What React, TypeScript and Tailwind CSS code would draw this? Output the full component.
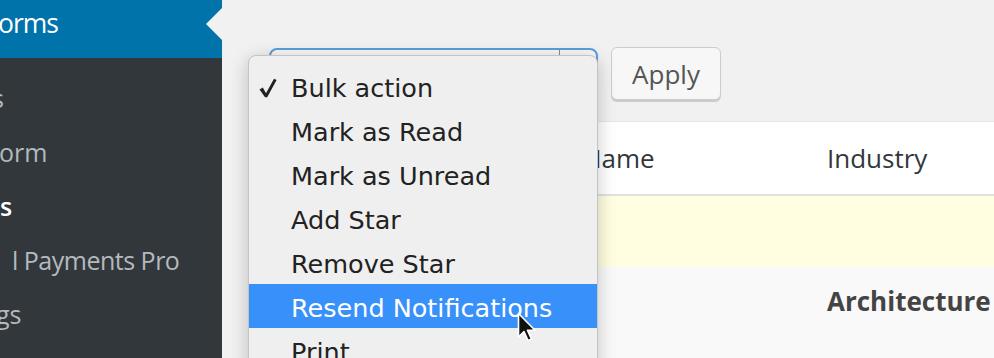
import React from "react";

const items = [
  "Bulk action",
  "Mark as Read",
  "Mark as Unread",
  "Add Star",
  "Remove Star",
  "Resend Notifications",
  "Print",
];

export default function App() {
  return (
    <div className="w-[994px] h-[358px] overflow-hidden flex bg-[#f1f1f1] font-['Open_Sans',sans-serif]">
      {/* Sidebar */}
      <div className="w-[222px] shrink-0 h-full bg-[#32373c] overflow-hidden relative">
        <div className="h-[58px] bg-[#0073aa] text-white text-[26.5px] tracking-[-1px] leading-[46px] overflow-hidden whitespace-nowrap">
          <span className="ml-[-2px] inline-block">orms</span>
        </div>
        <div className="absolute right-0 top-[8px] w-0 h-0 border-y-[16px] border-y-transparent border-r-[16px] border-r-[#f1f1f1]" />
        <div className="pt-[13px] text-[25px] text-[#b4b9be] whitespace-nowrap">
          <div className="h-[54px] leading-[54px]"><span className="ml-[-8px] inline-block">s</span></div>
          <div className="h-[54px] leading-[54px]"><span className="ml-[-1px] inline-block">orm</span></div>
          <div className="h-[54px] leading-[54px] text-white font-semibold"><span className="inline-block">s</span></div>
          <div className="h-[54px] leading-[54px] pl-[12px] tracking-[-0.5px]">l Payments Pro</div>
          <div className="h-[54px] leading-[54px]"><span className="ml-[-4px] inline-block">gs</span></div>
        </div>
      </div>

      {/* Main */}
      <div className="flex-1 relative h-full overflow-hidden">
        <div className="pt-[47px] pl-[46px] flex flex-col">
          <div className="flex items-start gap-[13px]">
            <div className="ml-[1px] mt-[1px] w-[329px] h-[53px] rounded-[8px] border-2 border-[#5b9dd9] bg-[#f7f7f7] relative">
              <div className="absolute right-[36px] top-0 w-px h-[6px] bg-[#8c8c8c]" />
            </div>
            <button className="w-[110px] h-[53px] rounded-[6px] border border-[#cccccc] bg-[#f7f7f7] shadow-[0_2px_0_#cccccc] text-[26px] text-[#555555] leading-none">
              Apply
            </button>
          </div>

          <div className="mt-[20px] border-t border-[#e5e5e5] w-[740px]">
            <div className="grid grid-cols-[314px_245px_1fr] h-[74px] bg-white border-b-2 border-[#e1e1e1] text-[26px] text-[#32373c] leading-[72px] whitespace-nowrap">
              <div />
              <div>Name</div>
              <div>Industry</div>
            </div>
            <div className="h-[71px] bg-[#fffee0]" />
            <div className="grid grid-cols-[314px_245px_1fr] h-[120px] bg-[#f9f9f9] pt-[16px] text-[26px] leading-[36px] text-[#444444] whitespace-nowrap">
              <div />
              <div />
              <div className="font-bold">Architecture</div>
            </div>
          </div>
        </div>

        {/* Dropdown menu overlay */}
        <div className="absolute left-[26px] top-[55px] w-[350px] h-[340px] rounded-[8px] border border-[#c4c4c4] bg-[#efefef] shadow-[0_4px_18px_rgba(0,0,0,0.22)] pt-[8px] font-['DejaVu_Sans',sans-serif] text-[25.5px] text-[#222222] whitespace-nowrap overflow-hidden">
          {items.map((t, i) => (
            <div
              key={t}
              className={
                "relative h-[44px] pt-[4px] leading-[40px] pl-[42px] " +
                (i === 5 ? "bg-[#3891fa] text-white" : "")
              }
            >
              {i === 0 && (
                <svg
                  className="absolute left-[10px] top-[14px]"
                  width="18"
                  height="20"
                  viewBox="0 0 18 20"
                >
                  <path d="M0.5 11.5 L3.8 9.6 L7 15.2 L15 0.8 L17.6 2 L8.2 19.2 L6 19.2 Z" fill="#222222" />
                </svg>
              )}
              {t}
            </div>
          ))}
        </div>

        {/* Mouse cursor */}
        <svg
          className="absolute left-[295px] top-[312px]"
          width="22"
          height="32"
          viewBox="0 0 22 32"
        >
          <path
            d="M1.5 1.5 L1.5 25 L7 19.5 L11 28.5 L14.5 27 L10.5 18.3 L18 18.3 Z"
            fill="#111111"
            stroke="#ffffff"
            strokeWidth="1.6"
            strokeLinejoin="round"
          />
        </svg>
      </div>
    </div>
  );
}
